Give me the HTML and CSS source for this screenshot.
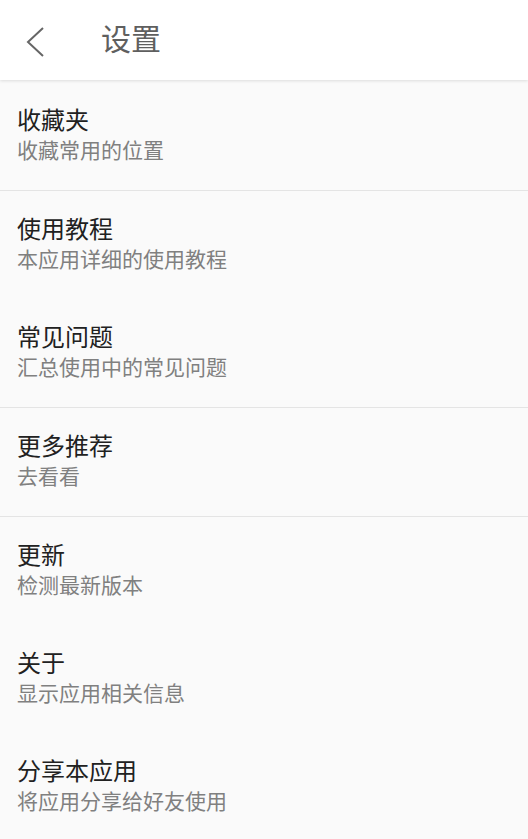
FILE: index.html
```html
<!DOCTYPE html>
<html lang="zh-CN">
<head>
    <meta charset="UTF-8">
    <meta name="viewport" content="width=device-width, initial-scale=1.0">
    <title>设置</title>
    <link rel="stylesheet" href="styles.css">
</head>
<body>

<header class="toolbar">
    <a href="#back" class="back">
        <svg width="20" height="32" viewBox="0 0 20 32">
            <polyline points="17,3 2,17 17,31" fill="none" stroke="#666" stroke-width="2"/>
        </svg>
    </a>
    <h1>设置</h1>
</header>

<main class="list">
    <section class="group">
        <a href="#fav" class="item">
            <span class="title">收藏夹</span>
            <span class="summary">收藏常用的位置</span>
        </a>
    </section>
    <section class="group">
        <a href="#guide" class="item">
            <span class="title">使用教程</span>
            <span class="summary">本应用详细的使用教程</span>
        </a>
        <a href="#faq" class="item">
            <span class="title">常见问题</span>
            <span class="summary">汇总使用中的常见问题</span>
        </a>
    </section>
    <section class="group">
        <a href="#more" class="item">
            <span class="title">更多推荐</span>
            <span class="summary">去看看</span>
        </a>
    </section>
    <section class="group">
        <a href="#update" class="item">
            <span class="title">更新</span>
            <span class="summary">检测最新版本</span>
        </a>
        <a href="#about" class="item">
            <span class="title">关于</span>
            <span class="summary">显示应用相关信息</span>
        </a>
        <a href="#share" class="item">
            <span class="title">分享本应用</span>
            <span class="summary">将应用分享给好友使用</span>
        </a>
    </section>
</main>

</body>
</html>
```

FILE: styles.css
```css
* {
    box-sizing: border-box;
}
html, body {
    height: 100%;
}
body {
    margin: 0;
    padding: 0;
    background: #fafafa;
    font-family: Roboto, "Noto Sans CJK SC", sans-serif;
    overflow: hidden;
}
.toolbar {
    position: relative;
    z-index: 1;
    height: 80px;
    display: flex;
    align-items: center;
    background: #fff;
    box-shadow: 0 1px 3px rgba(0, 0, 0, 0.12);
}
.back {
    display: flex;
    width: 101px;
    padding-left: 26px;
    padding-top: 2px;
}
.toolbar h1 {
    margin: 0;
    font-size: 30px;
    font-weight: normal;
    color: #5f5f5f;
    line-height: 1;
    padding-bottom: 1px;
}
.list {
    padding-top: 2px;
}
.group {
    border-bottom: 1px solid #e4e4e4;
}
.item {
    height: 108px;
    display: flex;
    flex-direction: column;
    justify-content: center;
    padding: 0 17px;
    text-decoration: none;
}
.title {
    font-size: 24px;
    line-height: 29px;
    color: #212121;
}
.summary {
    font-size: 21px;
    line-height: 30px;
    color: #808080;
}
```
